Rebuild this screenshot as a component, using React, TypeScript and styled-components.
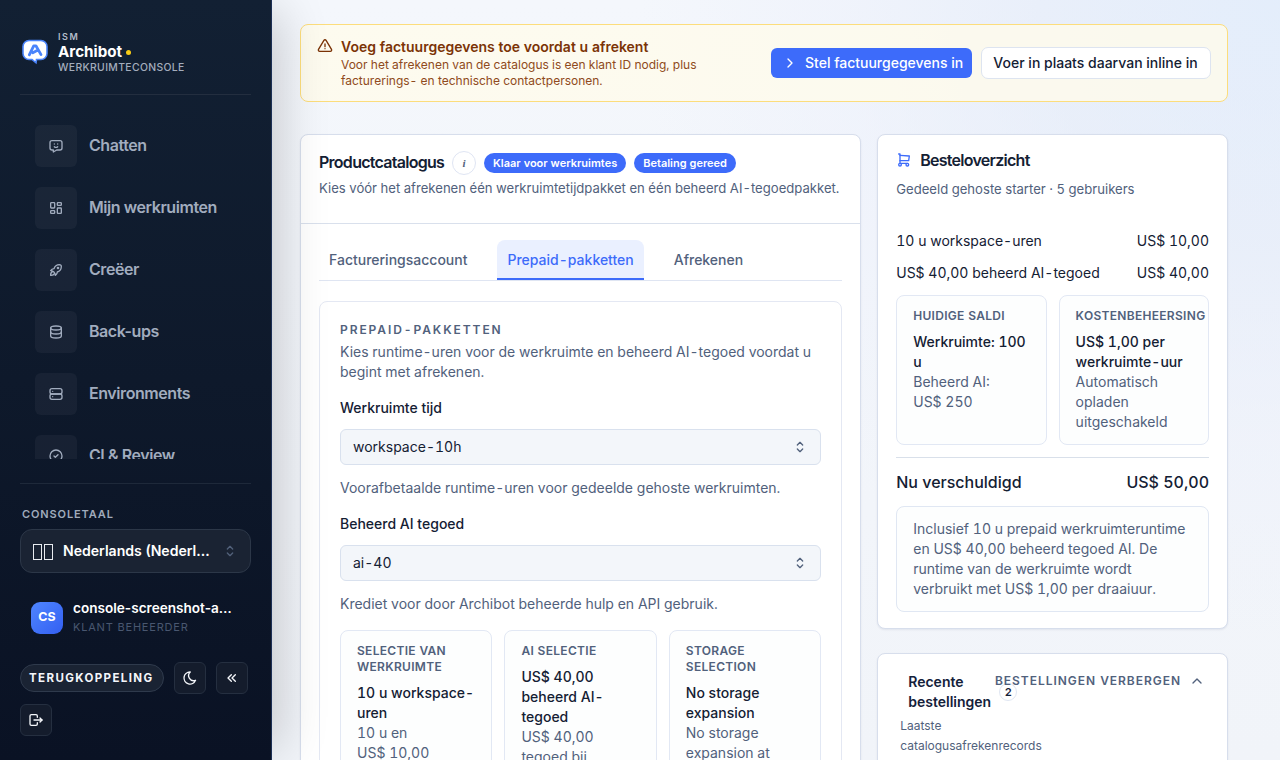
import React from "react";
import styled, { createGlobalStyle, css } from "styled-components";
import {
  TbAlertTriangle,
  TbChevronRight,
  TbChevronUp,
  TbChevronsLeft,
  TbCircleCheck,
  TbDatabase,
  TbLayoutDashboard,
  TbLogout,
  TbMessageChatbot,
  TbMoon,
  TbRocket,
  TbSelector,
  TbServer,
  TbShoppingCart,
} from "react-icons/tb";

const GlobalStyle = createGlobalStyle`
  * { box-sizing: border-box; }
  body {
    margin: 0;
    overflow: hidden;
    font-family: Inter, "Liberation Sans", sans-serif;
    font-size: 14px;
    line-height: 20px;
    color: #14213a;
  }
  h1, h2, h3, p { margin: 0; }
  button { font-family: inherit; }
`;

const ink = "#142033";
const muted = "#51617c";
const blue = "#3d6bfa";

const Shell = styled.div`
  display: flex;
  height: 760px;
  overflow: hidden;
  background:
    radial-gradient(circle at 100% 0%, rgba(208, 226, 250, 0.45), rgba(222, 231, 248, 0.5) 240px, rgba(236, 240, 251, 0.5) 440px, rgba(243, 246, 250, 0) 640px),
    linear-gradient(180deg, #f4f7fc, #f1f4f9);
`;

/* Sidebar */

const Sidebar = styled.aside`
  position: relative;
  z-index: 2;
  display: flex;
  flex-direction: column;
  flex: none;
  width: 272px;
  height: 760px;
  padding: 24px 20px;
  color: #fff;
  background: linear-gradient(180deg, #122033 0%, #0e192b 50%, #0a1224 100%);
  border-right: 1px solid #1c2f55;
  box-shadow: 18px 0 48px -12px rgba(0, 0, 0, 0.2);
`;

const Brand = styled.div`
  display: flex;
  align-items: center;
  gap: 9px;
  height: 71px;
  padding: 0 0 13px 1px;
  border-bottom: 1px solid #232e3f;
`;

const BrandText = styled.div`
  display: flex;
  flex-direction: column;
`;

const BrandKicker = styled.span`
  font-size: 9px;
  line-height: 12px;
  font-weight: 600;
  letter-spacing: 1.6px;
  color: #b4bdcb;
`;

const BrandName = styled.span`
  display: flex;
  align-items: center;
  gap: 4px;
  font-size: 15.2px;
  line-height: 18px;
  font-weight: 700;
`;

const StatusDot = styled.i`
  width: 5px;
  height: 5px;
  border-radius: 50%;
  background: #facc15;
`;

const BrandSub = styled.span`
  font-size: 10.4px;
  line-height: 13px;
  font-weight: 500;
  letter-spacing: 0.36px;
  color: #a3adbd;
`;

const Nav = styled.nav`
  height: 364px;
  padding: 20px 5px 0;
  overflow: hidden;
`;

const NavItem = styled.a`
  display: flex;
  align-items: center;
  gap: 12px;
  height: 62px;
  padding: 0 10px;
  color: #a1acbe;
`;

const NavLabel = styled.span`
  padding-bottom: 2px;
  font-size: 16px;
  font-weight: 600;
  letter-spacing: -0.43px;
`;

const NavIcon = styled.span`
  display: grid;
  place-items: center;
  width: 42px;
  height: 42px;
  border-radius: 6px;
  background: rgba(255, 255, 255, 0.045);
`;

const SidebarFoot = styled.div`
  margin-top: 24px;
  padding-top: 21px;
  border-top: 1px solid #1e293a;
`;

const FieldKicker = styled.div`
  padding-left: 2px;
  font-size: 11px;
  line-height: 18px;
  font-weight: 600;
  letter-spacing: 0.88px;
  color: #a0abbc;
`;

const LanguageSelect = styled.button`
  display: flex;
  align-items: center;
  width: 231px;
  height: 44px;
  margin-top: 6px;
  padding: 0 12px;
  border: 1px solid #2c3748;
  border-radius: 12px;
  background: #1a2333;
  color: #fff;
  font-size: 14.08px;
  font-weight: 600;
  svg { margin-left: auto; color: #52617a; }
`;

const Flag = styled.span`
  display: flex;
  gap: 2px;
  margin: 2px 10px 0 0;
`;

const FlagBox = styled.i`
  width: 9px;
  height: 16px;
  border: 1px solid #e8ebf0;
`;

const Ellipsis = styled.span<{ $width: number }>`
  width: ${(p) => p.$width}px;
  padding-bottom: 1px;
  overflow: hidden;
  text-align: left;
  text-overflow: ellipsis;
  white-space: nowrap;
`;

const Profile = styled.div`
  display: flex;
  align-items: center;
  gap: 10px;
  margin-top: 26px;
  padding: 0 11px;
`;

const Avatar = styled.span`
  display: grid;
  place-items: center;
  width: 32px;
  height: 32px;
  padding-bottom: 2px;
  border-radius: 9px;
  background: linear-gradient(135deg, #4f86ff, #335ff2);
  font-size: 12.4px;
  font-weight: 700;
`;

const ProfileText = styled.div`
  display: flex;
  flex-direction: column;
  height: 38px;
  font-size: 13.6px;
  line-height: 19px;
  font-weight: 600;
`;

const ProfileRole = styled.span`
  margin-top: -1px;
  font-size: 11px;
  font-weight: 400;
  letter-spacing: 0.8px;
  color: #495770;
`;

const Actions = styled.div`
  display: flex;
  flex-wrap: wrap;
  align-items: center;
  gap: 10px;
  margin-top: 25px;
`;

const actionSurface = css`
  display: grid;
  place-items: center;
  padding: 0;
  color: #f4f6fa;
  border: 1px solid #252f40;
  background: #141c2c;
`;

const FeedbackPill = styled.button`
  ${actionSurface}
  width: 144px;
  height: 28px;
  padding-right: 1.5px;
  border-color: #2f3a4c;
  border-radius: 14px;
  background: #1a2333;
  font-size: 11.52px;
  font-weight: 700;
  letter-spacing: 1.38px;
`;

const SquareButton = styled.button`
  ${actionSurface}
  width: 32px;
  height: 32px;
  border-radius: 6px;
`;

/* Main column */

const Main = styled.main`
  flex: 1;
  min-width: 0;
  padding: 24px 52px 0 28px;
  font-variant-numeric: tabular-nums;
`;

const Banner = styled.section`
  display: flex;
  align-items: center;
  justify-content: space-between;
  height: 78px;
  padding: 0 16px;
  border: 1px solid #fcdd7c;
  border-radius: 8px;
  background: rgba(255, 251, 235, 0.8);
  color: #7b3306;
`;

const BannerMessage = styled.div`
  display: flex;
  gap: 8px;
  svg { flex: none; margin-top: 1px; }
`;

const BannerTitle = styled.h3`
  font-size: 14px;
  line-height: 20px;
  font-weight: 600;
`;

const BannerText = styled.p`
  width: 390px;
  font-size: 12px;
  line-height: 16px;
  color: #8f4a20;
`;

const BannerActions = styled.div`
  display: flex;
  align-items: center;
  gap: 9px;
`;

const PrimaryButton = styled.button`
  display: flex;
  align-items: center;
  gap: 7px;
  height: 30px;
  width: 201px;
  padding: 0 0 0 11px;
  border: 0;
  border-radius: 6px;
  background: ${blue};
  color: #fff;
  font-size: 14px;
  font-weight: 500;
  white-space: nowrap;
`;

const ButtonText = styled.span`
  padding-bottom: 2px;
`;

const OutlineButton = styled.button`
  height: 32px;
  width: 230px;
  padding: 0 1px 2px 0;
  border: 1px solid #dde4f0;
  border-radius: 7px;
  background: #fff;
  color: ${ink};
  font-size: 14px;
  font-weight: 500;
  white-space: nowrap;
`;

const Columns = styled.div`
  display: grid;
  grid-template-columns: 1.6fr 1fr;
  align-items: start;
  gap: 16px;
  margin-top: 32px;
`;

const SideColumn = styled.div`
  display: grid;
  gap: 24px;
  min-width: 0;
`;

const Card = styled.section<{ $height: number }>`
  min-width: 0;
  height: ${(p) => p.$height}px;
  border: 1px solid #d7deec;
  border-radius: 8px;
  background: #fff;
  box-shadow: 0 1px 2px rgba(20, 40, 90, 0.08);
`;

const CatalogHead = styled.header`
  height: 89px;
  padding: 16px 18px 0;
  border-bottom: 1px solid #d9e0ec;
`;

const HeadRow = styled.div`
  display: flex;
  align-items: center;
  gap: 8px;
  height: 24px;
`;

const CardTitle = styled.h2<{ $lift?: number }>`
  padding-bottom: ${(p) => p.$lift ?? 0}px;
  font-size: 16px;
  line-height: 22px;
  font-weight: 600;
  letter-spacing: -0.73px;
  color: ${ink};
`;

const InfoDot = styled.span`
  display: grid;
  place-items: center;
  width: 24px;
  height: 24px;
  border: 1px solid #dfe5f3;
  border-radius: 50%;
  font: italic 600 11px "Liberation Serif", serif;
  color: ${muted};
`;

const Badge = styled.span`
  height: 20px;
  padding: 0 9px;
  border-radius: 10px;
  background: ${blue};
  color: #fff;
  font-size: 11px;
  line-height: 20px;
  font-weight: 600;
`;

const CardText = styled.p<{ $gap?: number }>`
  margin-top: ${(p) => p.$gap ?? 3}px;
  font-size: 13.12px;
  line-height: 20px;
  white-space: nowrap;
  color: ${muted};
`;

const Tabs = styled.div`
  display: flex;
  gap: 20px;
  height: 41px;
  margin: 16px 18px 20px;
  border-bottom: 1px solid #dfe5f2;
`;

const Tab = styled.button<{ $active?: boolean }>`
  height: 40px;
  padding: 0 10px;
  border: 0;
  border-bottom: 2px solid ${(p) => (p.$active ? blue : "transparent")};
  border-radius: 8px 8px 0 0;
  background: ${(p) => (p.$active ? "#eaf0ff" : "transparent")};
  color: ${(p) => (p.$active ? blue : muted)};
  font-size: 14px;
  font-weight: 500;
  font-variant-numeric: inherit;
`;

const Panel = styled.div`
  height: 620px;
  margin: 0 18px;
  padding: 18px 20px;
  border: 1px solid #e4e8f3;
  border-radius: 8px;
`;

const Eyebrow = styled.h3`
  font-size: 12px;
  line-height: 20px;
  font-weight: 600;
  letter-spacing: 1.92px;
  color: ${muted};
`;

const Hint = styled.p`
  margin: 2px 0 16px;
  color: ${muted};
`;

const Label = styled.div`
  font-weight: 500;
  color: ${ink};
`;

const SelectBox = styled.button`
  display: flex;
  align-items: center;
  justify-content: space-between;
  width: 100%;
  height: 36px;
  margin: 11px 0 13px;
  padding: 0 12px;
  border: 1px solid #d9e1ee;
  border-radius: 6px;
  background: #f3f6fa;
  color: ${ink};
  font-size: 14px;
  font-variant-numeric: inherit;
  svg { color: ${muted}; }
`;

const FieldHint = styled.p`
  margin-bottom: 16px;
  color: ${muted};
`;

const Tiles = styled.div<{ $columns: number }>`
  display: grid;
  grid-template-columns: repeat(${(p) => p.$columns}, minmax(0, 1fr));
  gap: 12px;
`;

const Tile = styled.div<{ $height: number }>`
  height: ${(p) => p.$height}px;
  padding: 12px 16px;
  border: 1px solid #e2e8f4;
  border-radius: 8px;
  background: #fdfefe;
  color: ${muted};
`;

const TileTitle = styled.h3`
  margin-bottom: 8px;
  font-size: 12px;
  line-height: 16px;
  font-weight: 600;
  letter-spacing: 0.3px;
`;

const Strong = styled.p`
  font-weight: 500;
  color: ${ink};
`;

const SummaryBody = styled.div`
  padding: 13px 18px 0;
  svg { color: ${blue}; }
`;

const LineItem = styled.div<{ $total?: boolean }>`
  display: flex;
  justify-content: space-between;
  height: ${(p) => (p.$total ? 36 : 32)}px;
  font-size: ${(p) => (p.$total ? 16 : 14)}px;
  line-height: ${(p) => (p.$total ? 24 : 20)}px;
  font-weight: ${(p) => (p.$total ? 500 : 400)};
  color: ${ink};
`;

const LineItems = styled.div`
  margin-top: 32px;
`;

const Divider = styled.hr`
  height: 1px;
  margin: 12px 0;
  border: 0;
  background: #d9e0ea;
`;

const Note = styled.div`
  height: 106px;
  padding: 12px 16px;
  border: 1px solid #e0e7f3;
  border-radius: 8px;
  background: #fdfefe;
  color: ${muted};
`;

const Orders = styled.div`
  position: relative;
  padding: 18px 22px 0;
`;

const OrdersTitle = styled.h3`
  width: 90px;
  padding-left: 8px;
  font-size: 14px;
  line-height: 20px;
  font-weight: 600;
`;

const OrdersText = styled.p`
  width: 145px;
  margin-top: 4px;
  font-size: 12px;
  color: ${muted};
`;

const CountBadge = styled.span`
  position: absolute;
  left: 121px;
  top: 29px;
  width: 18px;
  height: 18px;
  border: 1px solid #e0e6f2;
  border-radius: 50%;
  font-size: 11px;
  line-height: 16px;
  font-weight: 600;
  text-align: center;
`;

const OrdersToggle = styled.span`
  position: absolute;
  right: 22px;
  top: 17px;
  display: flex;
  align-items: center;
  gap: 8px;
  font-size: 12px;
  font-weight: 600;
  letter-spacing: 0.96px;
  white-space: nowrap;
  color: ${muted};
`;

const Logo = () => (
  <svg width="28" height="27" viewBox="0 0 28 27">
    <path
      d="M8 1.500h12a6 6 0 0 1 6 6v7a6 6 0 0 1-6 6h-4.500l-.5 3.300-4-3.300H8a6 6 0 0 1-6-6v-7a6 6 0 0 1 6-6Z"
      fill="#fff"
      stroke="#4a84fb"
      strokeWidth="1.600"
    />
    <path
      d="M8.300 15.800 12.700 6.800h2.200L20 15.600M11.800 13.700 15.600 11.800"
      fill="none"
      stroke="#4a84fb"
      strokeWidth="2.800"
      strokeLinecap="round"
      strokeLinejoin="round"
    />
  </svg>
);

const navItems = [
  { label: "Chatten", Icon: TbMessageChatbot },
  { label: "Mijn werkruimten", Icon: TbLayoutDashboard },
  { label: "Creëer", Icon: TbRocket },
  { label: "Back-ups", Icon: TbDatabase },
  { label: "Environments", Icon: TbServer },
  { label: "CI & Review", Icon: TbCircleCheck },
];

const selections = [
  { title: "SELECTIE VAN WERKRUIMTE", value: "10 u workspace-uren", detail: "10 u en US$\u00a010,00" },
  { title: "AI SELECTIE", value: "US$\u00a040,00 beheerd AI-tegoed", detail: "US$\u00a040,00 tegoed bij" },
  { title: "STORAGE SELECTION", value: "No storage expansion", detail: "No storage expansion at" },
];

export default function App() {
  return (
    <Shell>
      <GlobalStyle />
      <Sidebar>
        <Brand>
          <Logo />
          <BrandText>
            <BrandKicker>ISM</BrandKicker>
            <BrandName>
              Archibot <StatusDot />
            </BrandName>
            <BrandSub>WERKRUIMTECONSOLE</BrandSub>
          </BrandText>
        </Brand>
        <Nav>
          {navItems.map(({ label, Icon }) => (
            <NavItem key={label}>
              <NavIcon>
                <Icon size={16} />
              </NavIcon>
              <NavLabel>{label}</NavLabel>
            </NavItem>
          ))}
        </Nav>
        <SidebarFoot>
          <FieldKicker>CONSOLETAAL</FieldKicker>
          <LanguageSelect>
            <Flag>
              <FlagBox />
              <FlagBox />
            </Flag>
            <Ellipsis $width={150}>Nederlands (Nederland)</Ellipsis>
            <TbSelector size={16} />
          </LanguageSelect>
          <Profile>
            <Avatar>CS</Avatar>
            <ProfileText>
              <Ellipsis $width={164}>console-screenshot-admin</Ellipsis>
              <ProfileRole>KLANT BEHEERDER</ProfileRole>
            </ProfileText>
          </Profile>
          <Actions>
            <FeedbackPill>TERUGKOPPELING</FeedbackPill>
            <SquareButton>
              <TbMoon size={16} />
            </SquareButton>
            <SquareButton>
              <TbChevronsLeft size={16} />
            </SquareButton>
            <SquareButton>
              <TbLogout size={16} />
            </SquareButton>
          </Actions>
        </SidebarFoot>
      </Sidebar>

      <Main>
        <Banner>
          <BannerMessage>
            <TbAlertTriangle size={16} />
            <div>
              <BannerTitle>Voeg factuurgegevens toe voordat u afrekent</BannerTitle>
              <BannerText>
                Voor het afrekenen van de catalogus is een klant ID nodig, plus facturerings- en technische contactpersonen.
              </BannerText>
            </div>
          </BannerMessage>
          <BannerActions>
            <PrimaryButton>
              <TbChevronRight size={16} />
              <ButtonText>Stel factuurgegevens in</ButtonText>
            </PrimaryButton>
            <OutlineButton>Voer in plaats daarvan inline in</OutlineButton>
          </BannerActions>
        </Banner>

        <Columns>
          <Card $height={700}>
            <CatalogHead>
              <HeadRow>
                <CardTitle $lift={2}>Productcatalogus</CardTitle>
                <InfoDot>i</InfoDot>
                <Badge>Klaar voor werkruimtes</Badge>
                <Badge>Betaling gereed</Badge>
              </HeadRow>
              <CardText>Kies vóór het afrekenen één werkruimtetijdpakket en één beheerd AI-tegoedpakket.</CardText>
            </CatalogHead>
            <Tabs>
              <Tab>Factureringsaccount</Tab>
              <Tab $active>Prepaid-pakketten</Tab>
              <Tab>Afrekenen</Tab>
            </Tabs>
            <Panel>
              <Eyebrow>PREPAID-PAKKETTEN</Eyebrow>
              <Hint>Kies runtime-uren voor de werkruimte en beheerd AI-tegoed voordat u begint met afrekenen.</Hint>
              <Label>Werkruimte tijd</Label>
              <SelectBox>
                <ButtonText>workspace-10h</ButtonText>
                <TbSelector size={16} />
              </SelectBox>
              <FieldHint>Voorafbetaalde runtime-uren voor gedeelde gehoste werkruimten.</FieldHint>
              <Label>Beheerd AI tegoed</Label>
              <SelectBox>
                <ButtonText>ai-40</ButtonText>
                <TbSelector size={16} />
              </SelectBox>
              <FieldHint>Krediet voor door Archibot beheerde hulp en API gebruik.</FieldHint>
              <Tiles $columns={3}>
                {selections.map((s) => (
                  <Tile key={s.title} $height={180}>
                    <TileTitle>{s.title}</TileTitle>
                    <Strong>{s.value}</Strong>
                    <p>{s.detail}</p>
                  </Tile>
                ))}
              </Tiles>
            </Panel>
          </Card>

          <SideColumn>
            <Card $height={495}>
              <SummaryBody>
                <HeadRow>
                  <TbShoppingCart size={16} />
                  <CardTitle>Besteloverzicht</CardTitle>
                </HeadRow>
                <CardText $gap={7}>Gedeeld gehoste starter · 5 gebruikers</CardText>
                <LineItems>
                  <LineItem>
                    <span>10 u workspace-uren</span>
                    <span>US$ 10,00</span>
                  </LineItem>
                  <LineItem>
                    <span>US$ 40,00 beheerd AI-tegoed</span>
                    <span>US$ 40,00</span>
                  </LineItem>
                </LineItems>
                <Tiles $columns={2}>
                  <Tile $height={150}>
                    <TileTitle>HUIDIGE SALDI</TileTitle>
                    <Strong>Werkruimte: 100 u</Strong>
                    <p>{"Beheerd AI: US$\u00a0250"}</p>
                  </Tile>
                  <Tile $height={150}>
                    <TileTitle>KOSTENBEHEERSING</TileTitle>
                    <Strong>{"US$\u00a01,00 per werkruimte-uur"}</Strong>
                    <p>Automatisch opladen uitgeschakeld</p>
                  </Tile>
                </Tiles>
                <Divider />
                <LineItem $total>
                  <span>Nu verschuldigd</span>
                  <span>US$ 50,00</span>
                </LineItem>
                <Note>
                  {"Inclusief 10 u prepaid werkruimteruntime en US$\u00a040,00 beheerd tegoed AI. De runtime van de werkruimte wordt verbruikt met US$\u00a01,00 per draaiuur."}
                </Note>
              </SummaryBody>
            </Card>
            <Card $height={180}>
              <Orders>
                <OrdersTitle>Recente bestellingen</OrdersTitle>
                <CountBadge>2</CountBadge>
                <OrdersToggle>
                  BESTELLINGEN VERBERGEN <TbChevronUp size={16} />
                </OrdersToggle>
                <OrdersText>Laatste catalogusafrekenrecords</OrdersText>
              </Orders>
            </Card>
          </SideColumn>
        </Columns>
      </Main>
    </Shell>
  );
}
